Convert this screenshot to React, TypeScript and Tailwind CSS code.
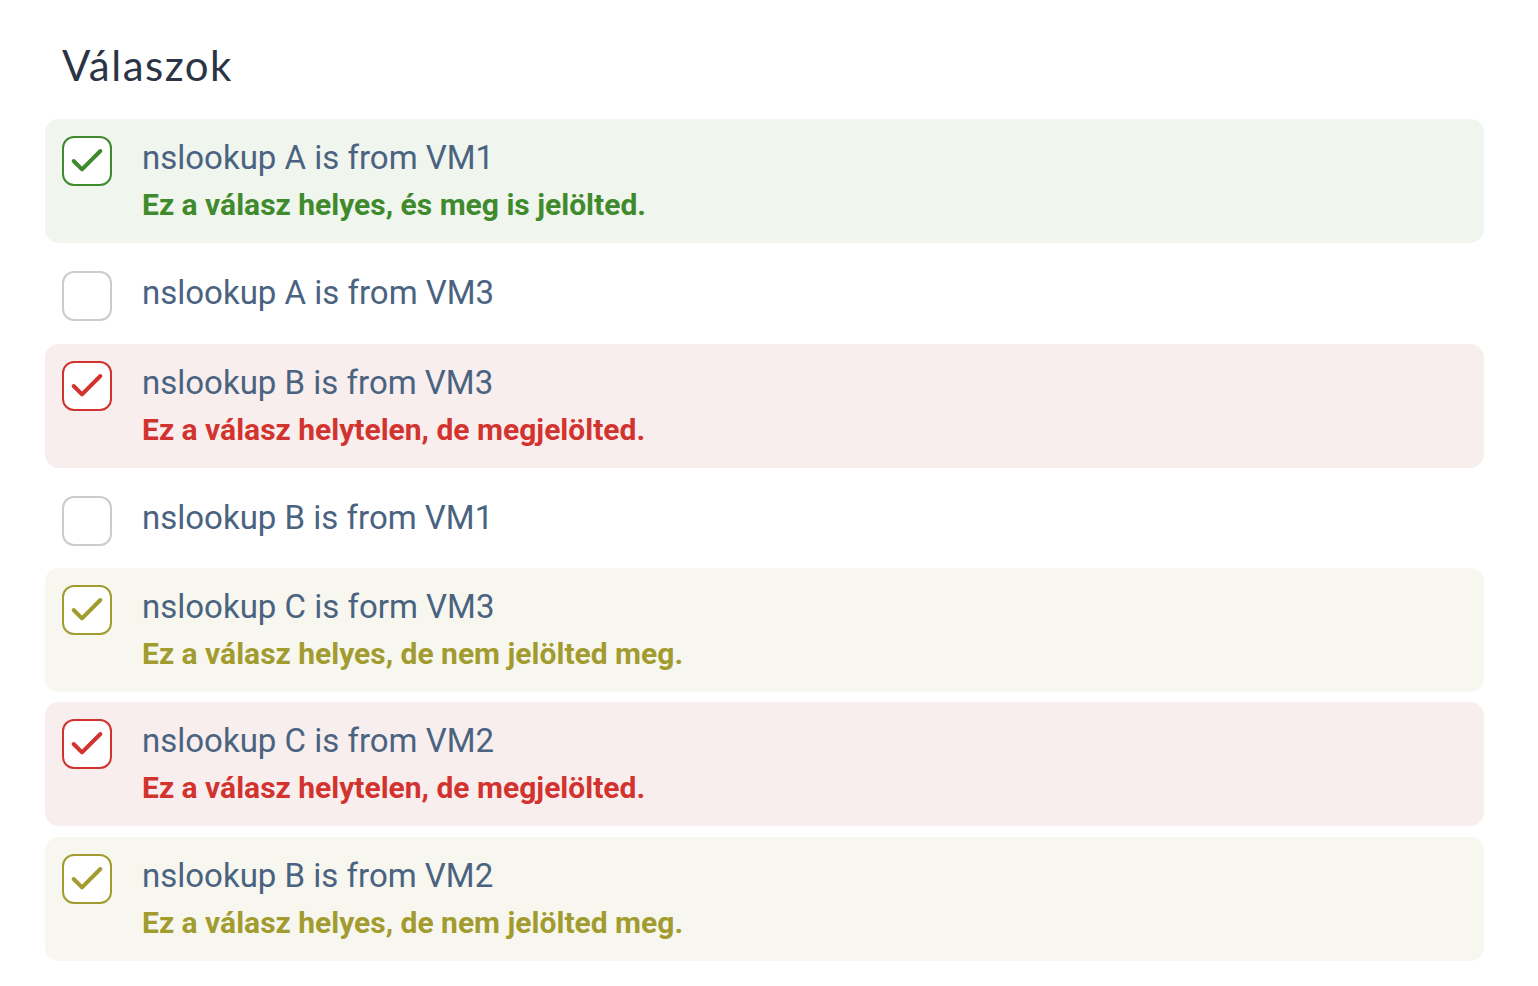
import { Check } from "lucide-react";

type Status = "correct" | "wrong" | "missed" | "none";

type Answer = { text: string; status: Status };

const answers: Answer[] = [
  { text: "nslookup A is from VM1", status: "correct" },
  { text: "nslookup A is from VM3", status: "none" },
  { text: "nslookup B is from VM3", status: "wrong" },
  { text: "nslookup B is from VM1", status: "none" },
  { text: "nslookup C is form VM3", status: "missed" },
  { text: "nslookup C is from VM2", status: "wrong" },
  { text: "nslookup B is from VM2", status: "missed" },
];

const styles = {
  correct: {
    row: "bg-[#f0f5ee] pt-[17px] pb-[20px]",
    box: "border-[#3f8a2c] text-[#3f8a2c]",
    note: "text-[#3f8a2c]",
    msg: "Ez a válasz helyes, és meg is jelölted.",
  },
  wrong: {
    row: "bg-[#f9eeee] pt-[17px] pb-[20px]",
    box: "border-[#d2332f] text-[#d2332f]",
    note: "text-[#d2332f]",
    msg: "Ez a válasz helytelen, de megjelölted.",
  },
  missed: {
    row: "bg-[#f7f7f0] pt-[17px] pb-[20px]",
    box: "border-[#a29c30] text-[#a29c30]",
    note: "text-[#a29c30]",
    msg: "Ez a válasz helyes, de nem jelölted meg.",
  },
  none: {
    row: "pt-[18px] pb-[12px]",
    box: "border-[#cccccc]",
    note: "",
    msg: "",
  },
};

const AnswerRow = ({ answer }: { answer: Answer }) => {
  const s = styles[answer.status];
  return (
    <li className={`flex items-start gap-[30px] rounded-[14px] pl-[17px] pr-4 ${s.row}`}>
      <div className={`flex h-[50px] w-[50px] shrink-0 items-center justify-center rounded-[12px] border-2 bg-white ${s.box}`}>
        {answer.status !== "none" && <Check className="h-[40px] w-[40px]" strokeWidth={2.4} />}
      </div>
      <div className="flex flex-col">
        <span className="mt-[2px] text-[33px] leading-[40px] text-[#4a6380]">{answer.text}</span>
        {s.msg && <span className={`mt-[9px] text-[30px] font-bold leading-[36px] ${s.note}`}>{s.msg}</span>}
      </div>
    </li>
  );
};

export default function App() {
  return (
    <div className="min-h-screen bg-white pl-[45px] pr-[54px] pt-[38px]" style={{ fontFamily: "Roboto, 'Liberation Sans', sans-serif" }}>
      <h2 className="pl-[17px] text-[42px] leading-[54px] tracking-[1.5px] text-[#2b3445]" style={{ fontFamily: "Lato, 'Noto Sans', sans-serif" }}>
        Válaszok
      </h2>
      <ul className="mt-[27px] flex flex-col gap-[10.3px]">
        {answers.map((a) => (
          <AnswerRow key={a.text} answer={a} />
        ))}
      </ul>
    </div>
  );
}
